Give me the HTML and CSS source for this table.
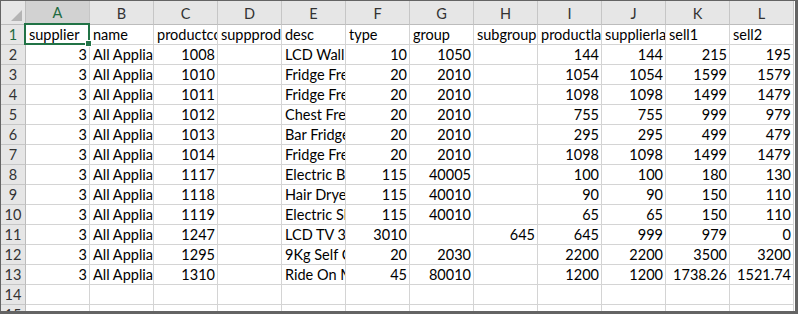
FILE: index.html
```html
<!DOCTYPE html>
<html>
<head>
<meta charset="utf-8">
<link rel="stylesheet" href="styles.css">
</head>
<body>
<div class="frame">
  <div class="sheet">
    <div class="corner"><span class="tri"></span></div>
    <div class="ch sel-col">A</div><div class="ch">B</div><div class="ch">C</div><div class="ch">D</div><div class="ch">E</div><div class="ch">F</div><div class="ch">G</div><div class="ch">H</div><div class="ch">I</div><div class="ch">J</div><div class="ch">K</div><div class="ch">L</div>

    <div class="rh sel-row">1</div>
    <div class="c active">supplier<span class="selbox"><span class="handle"></span></span></div><div class="c">name</div><div class="c">productcode</div><div class="c">suppproductcode</div><div class="c">desc</div><div class="c">type</div><div class="c">group</div><div class="c">subgroup</div><div class="c">productlatest</div><div class="c">supplierlatest</div><div class="c">sell1</div><div class="c">sell2</div>

    <div class="rh">2</div>
    <div class="c n">3</div><div class="c">All Appliances</div><div class="c n">1008</div><div class="c"></div><div class="c">LCD Wall Bracket</div><div class="c n">10</div><div class="c n">1050</div><div class="c"></div><div class="c n">144</div><div class="c n">144</div><div class="c n">215</div><div class="c n">195</div>

    <div class="rh">3</div>
    <div class="c n">3</div><div class="c">All Appliances</div><div class="c n">1010</div><div class="c"></div><div class="c">Fridge Freezer</div><div class="c n">20</div><div class="c n">2010</div><div class="c"></div><div class="c n">1054</div><div class="c n">1054</div><div class="c n">1599</div><div class="c n">1579</div>

    <div class="rh">4</div>
    <div class="c n">3</div><div class="c">All Appliances</div><div class="c n">1011</div><div class="c"></div><div class="c">Fridge Freezer</div><div class="c n">20</div><div class="c n">2010</div><div class="c"></div><div class="c n">1098</div><div class="c n">1098</div><div class="c n">1499</div><div class="c n">1479</div>

    <div class="rh">5</div>
    <div class="c n">3</div><div class="c">All Appliances</div><div class="c n">1012</div><div class="c"></div><div class="c">Chest Freezer</div><div class="c n">20</div><div class="c n">2010</div><div class="c"></div><div class="c n">755</div><div class="c n">755</div><div class="c n">999</div><div class="c n">979</div>

    <div class="rh">6</div>
    <div class="c n">3</div><div class="c">All Appliances</div><div class="c n">1013</div><div class="c"></div><div class="c">Bar Fridge</div><div class="c n">20</div><div class="c n">2010</div><div class="c"></div><div class="c n">295</div><div class="c n">295</div><div class="c n">499</div><div class="c n">479</div>

    <div class="rh">7</div>
    <div class="c n">3</div><div class="c">All Appliances</div><div class="c n">1014</div><div class="c"></div><div class="c">Fridge Freezer</div><div class="c n">20</div><div class="c n">2010</div><div class="c"></div><div class="c n">1098</div><div class="c n">1098</div><div class="c n">1499</div><div class="c n">1479</div>

    <div class="rh">8</div>
    <div class="c n">3</div><div class="c">All Appliances</div><div class="c n">1117</div><div class="c"></div><div class="c">Electric Blanket</div><div class="c n">115</div><div class="c n">40005</div><div class="c"></div><div class="c n">100</div><div class="c n">100</div><div class="c n">180</div><div class="c n">130</div>

    <div class="rh">9</div>
    <div class="c n">3</div><div class="c">All Appliances</div><div class="c n">1118</div><div class="c"></div><div class="c">Hair Dryer</div><div class="c n">115</div><div class="c n">40010</div><div class="c"></div><div class="c n">90</div><div class="c n">90</div><div class="c n">150</div><div class="c n">110</div>

    <div class="rh">10</div>
    <div class="c n">3</div><div class="c">All Appliances</div><div class="c n">1119</div><div class="c"></div><div class="c">Electric Shaver</div><div class="c n">115</div><div class="c n">40010</div><div class="c"></div><div class="c n">65</div><div class="c n">65</div><div class="c n">150</div><div class="c n">110</div>

    <div class="rh">11</div>
    <div class="c n">3</div><div class="c">All Appliances</div><div class="c n">1247</div><div class="c"></div><div class="c">LCD TV 30" HD</div><div class="c n">3010</div><div class="c"></div><div class="c n">645</div><div class="c n">645</div><div class="c n">999</div><div class="c n">979</div><div class="c n">0</div>

    <div class="rh">12</div>
    <div class="c n">3</div><div class="c">All Appliances</div><div class="c n">1295</div><div class="c"></div><div class="c">9Kg Self Clean Washer</div><div class="c n">20</div><div class="c n">2030</div><div class="c"></div><div class="c n">2200</div><div class="c n">2200</div><div class="c n">3500</div><div class="c n">3200</div>

    <div class="rh">13</div>
    <div class="c n">3</div><div class="c">All Appliances</div><div class="c n">1310</div><div class="c"></div><div class="c">Ride On Mower</div><div class="c n">45</div><div class="c n">80010</div><div class="c"></div><div class="c n">1200</div><div class="c n">1200</div><div class="c n">1738.26</div><div class="c n">1521.74</div>

    <div class="rh">14</div>
    <div class="c"></div><div class="c"></div><div class="c"></div><div class="c"></div><div class="c"></div><div class="c"></div><div class="c"></div><div class="c"></div><div class="c"></div><div class="c"></div><div class="c"></div><div class="c"></div>

    <div class="rh">15</div>
    <div class="c"></div><div class="c"></div><div class="c"></div><div class="c"></div><div class="c"></div><div class="c"></div><div class="c"></div><div class="c"></div><div class="c"></div><div class="c"></div><div class="c"></div><div class="c"></div>
  </div>
</div>
</body>
</html>
```

FILE: styles.css
```css
html, body {
  margin: 0;
  padding: 0;
  background: #ffffff;
}

.frame {
  width: 798px;
  height: 314px;
  box-sizing: border-box;
  border-style: solid;
  border-color: #646464;
  border-width: 1px 3px 3px 1px;
  overflow: hidden;
  background: #ffffff;
}

.sheet {
  display: grid;
  grid-template-columns: 25px repeat(12, 64px);
  grid-template-rows: 24px repeat(15, 20px);
  font-family: Lato, "Open Sans", sans-serif;
  font-size: 14.5px;
  color: #000;
}

.corner {
  background: #e6e6e6;
  box-sizing: border-box;
  border-right: 1px solid #bcbcbc;
  border-bottom: 1px solid #bcbcbc;
  display: flex;
  align-items: flex-end;
  justify-content: flex-end;
  padding: 0 3px 3px 0;
}

.tri {
  display: block;
  width: 11px;
  height: 11px;
  background: #b4b4b4;
  clip-path: polygon(100% 0, 100% 100%, 0 100%);
}

.ch {
  background: #e6e6e6;
  box-sizing: border-box;
  border-right: 1px solid #c6c6c6;
  border-bottom: 1px solid #bcbcbc;
  display: flex;
  align-items: center;
  justify-content: center;
  color: #333;
  padding-top: 1px;
}

.ch.sel-col {
  background: #d2d2d2;
  color: #1e6b41;
  border-bottom: 2px solid #217346;
}

.rh {
  background: #e6e6e6;
  box-sizing: border-box;
  border-right: 1px solid #bcbcbc;
  border-bottom: 1px solid #c6c6c6;
  display: flex;
  align-items: center;
  justify-content: center;
  color: #333;
}

.rh.sel-row {
  color: #1e6b41;
}

.c {
  box-sizing: border-box;
  border-right: 1px solid #d4d4d4;
  border-bottom: 1px solid #d4d4d4;
  white-space: nowrap;
  overflow: hidden;
  padding: 0 2px 0 3px;
  line-height: 19px;
}

.c.n {
  text-align: right;
}

.c.active {
  position: relative;
  overflow: visible;
}

.selbox {
  position: absolute;
  left: -2px;
  top: -2px;
  right: -1px;
  bottom: -1px;
  border: 2px solid #217346;
  pointer-events: none;
}

.handle {
  position: absolute;
  right: -4px;
  bottom: -4px;
  width: 5px;
  height: 5px;
  background: #217346;
  border: 1px solid #ffffff;
}
```
